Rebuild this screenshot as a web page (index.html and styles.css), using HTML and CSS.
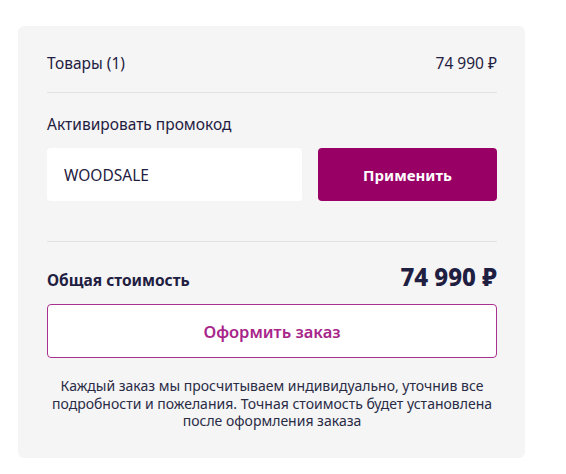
FILE: index.html
```html
<!DOCTYPE html>
<html lang="ru">
<head>
    <meta charset="UTF-8">
    <meta name="viewport" content="width=device-width, initial-scale=1.0">
    <title>Корзина</title>
    <link rel="stylesheet" href="styles.css">
</head>
<body>
    <div class="summary">
        <div class="row items">
            <span>Товары (1)</span>
            <span>74 990 ₽</span>
        </div>

        <div class="promo">
            <div class="promo-label">Активировать промокод</div>
            <div class="promo-form">
                <input class="promo-input" type="text" value="WOODSALE">
                <button class="apply">Применить</button>
            </div>
        </div>

        <div class="row total">
            <span class="total-label">Общая стоимость</span>
            <span class="total-price">74 990 ₽</span>
        </div>

        <button class="checkout">Оформить заказ</button>

        <p class="note">Каждый заказ мы просчитываем индивидуально, уточнив все подробности и пожелания. Точная стоимость будет установлена после оформления заказа</p>
    </div>
</body>
</html>
```

FILE: styles.css
```css
body {
    font-family: "Noto Sans", Arial, sans-serif;
    background-color: #ffffff;
    margin: 0;
    padding: 26px 0 0 18px;
    color: #1f2041;
}

.summary {
    background: #f5f5f6;
    border-radius: 6px;
    width: 507px;
    box-sizing: border-box;
    padding: 18px 28px 28px 29px;
}

.row {
    display: flex;
    justify-content: space-between;
    align-items: baseline;
}

.items {
    font-size: 15.5px;
    line-height: 38px;
    padding-bottom: 10px;
    border-bottom: 1px solid #e2e2e6;
}

.promo {
    padding: 19px 0 40px;
    border-bottom: 1px solid #e2e2e6;
}

.promo-label {
    font-size: 15.5px;
    line-height: 24px;
    margin-bottom: 12px;
}

.promo-form {
    display: flex;
    gap: 16px;
}

.promo-input {
    flex: 1;
    min-width: 0;
    height: 53px;
    box-sizing: border-box;
    border: none;
    border-radius: 4px;
    background: #ffffff;
    padding: 0 17px;
    font-family: inherit;
    font-size: 15.5px;
    color: #1f2041;
    outline: none;
}

.apply {
    width: 179px;
    height: 53px;
    border: none;
    border-radius: 4px;
    background: #990066;
    color: #ffffff;
    font-family: inherit;
    font-size: 15px;
    font-weight: 700;
    cursor: pointer;
}

.total {
    padding-top: 18px;
    margin-bottom: 11px;
}

.total-label {
    font-size: 15.5px;
    font-weight: 700;
}

.total-price {
    font-size: 24px;
    font-weight: 800;
}

.checkout {
    width: 100%;
    height: 54px;
    border: 1px solid #a8308f;
    border-radius: 4px;
    background: #ffffff;
    color: #a8258a;
    font-family: inherit;
    font-size: 16.5px;
    font-weight: 600;
    cursor: pointer;
}

.note {
    margin: 19px 0 0;
    text-align: center;
    font-size: 14px;
    line-height: 17.5px;
    color: #2a2b45;
}
```
